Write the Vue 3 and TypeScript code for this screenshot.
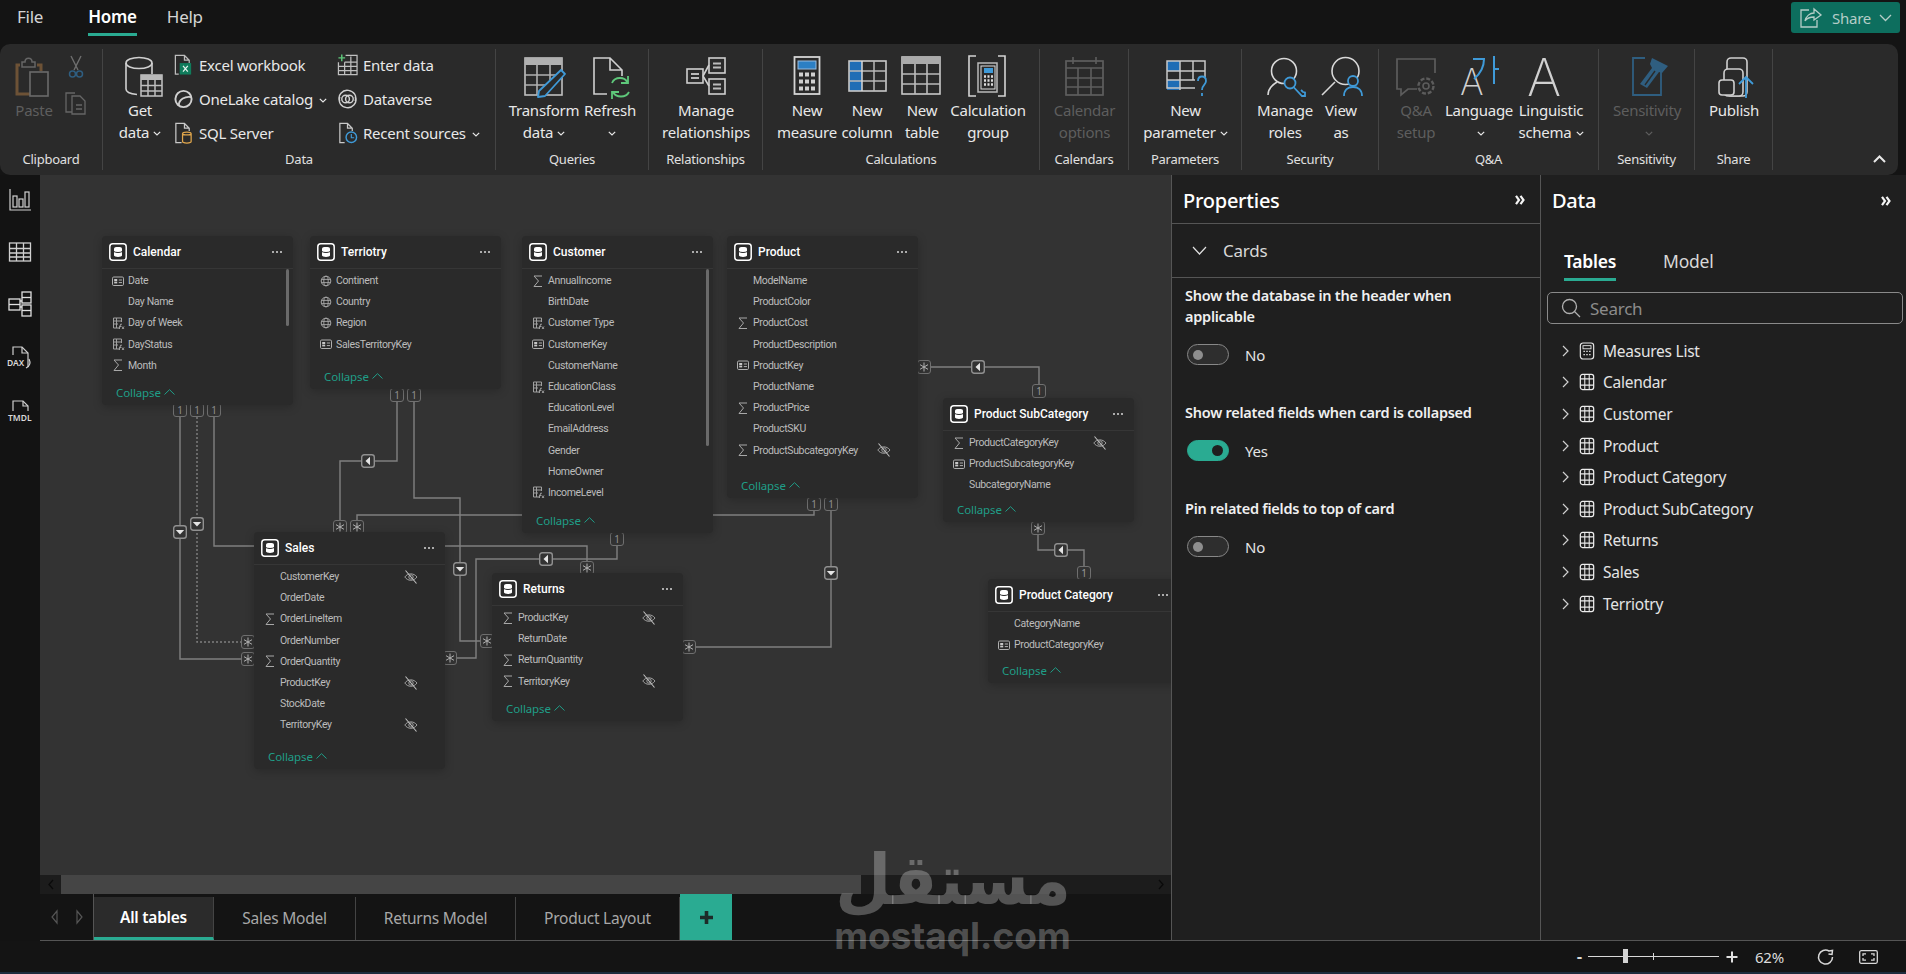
<script setup lang="ts">
interface RibbonItem {
  lines: string[]
  icon: string
  w: number
  chev?: boolean
  off?: boolean
}
interface RibbonGroup {
  label: string
  w: number
  pad: number
  items: RibbonItem[]
}
interface Field {
  n: string
  i?: string
  hid?: boolean
}
interface Card {
  title: string
  x: number
  y: number
  h: number
  bar?: number
  fields: Field[]
}

const clipboardW = 103

const rightGroups: RibbonGroup[] = [
  { label: 'Queries', w: 153, pad: 9, items: [
    { lines: ['Transform', 'data'], icon: 'transform', w: 78, chev: true },
    { lines: ['Refresh', ''], icon: 'refresh', w: 54, chev: true }
  ] },
  { label: 'Relationships', w: 114, pad: 0, items: [
    { lines: ['Manage', 'relationships'], icon: 'rel', w: 114 }
  ] },
  { label: 'Calculations', w: 277, pad: 11, items: [
    { lines: ['New', 'measure'], icon: 'measure', w: 66 },
    { lines: ['New', 'column'], icon: 'column', w: 54 },
    { lines: ['New', 'table'], icon: 'table', w: 56 },
    { lines: ['Calculation', 'group'], icon: 'calcgroup', w: 76 }
  ] },
  { label: 'Calendars', w: 89, pad: 0, items: [
    { lines: ['Calendar', 'options'], icon: 'calendar', w: 89, off: true }
  ] },
  { label: 'Parameters', w: 113, pad: 0, items: [
    { lines: ['New', 'parameter'], icon: 'param', w: 113, chev: true }
  ] },
  { label: 'Security', w: 137, pad: 8, items: [
    { lines: ['Manage', 'roles'], icon: 'roles', w: 70 },
    { lines: ['View', 'as'], icon: 'viewas', w: 42 }
  ] },
  { label: 'Q&A', w: 220, pad: 11, items: [
    { lines: ['Q&A', 'setup'], icon: 'qa', w: 52, off: true },
    { lines: ['Language', ''], icon: 'language', w: 74, chev: true },
    { lines: ['Linguistic', 'schema'], icon: 'linguistic', w: 70, chev: true }
  ] },
  { label: 'Sensitivity', w: 96, pad: 0, items: [
    { lines: ['Sensitivity', ''], icon: 'sensitivity', w: 96, chev: true, off: true }
  ] },
  { label: 'Share', w: 78, pad: 0, items: [
    { lines: ['Publish'], icon: 'publish', w: 78 }
  ] }
]

const dataCol1 = [
  { t: 'Excel workbook', i: 'excel' },
  { t: 'OneLake catalog', i: 'onelake', chev: true },
  { t: 'SQL Server', i: 'sql' }
]
const dataCol2 = [
  { t: 'Enter data', i: 'enter' },
  { t: 'Dataverse', i: 'dataverse' },
  { t: 'Recent sources', i: 'recent', chev: true }
]

const cards: Card[] = [
  { title: 'Calendar', x: 102, y: 236, h: 169, bar: 57, fields: [
    { n: 'Date', i: 'key' }, { n: 'Day Name' }, { n: 'Day of Week', i: 'calc' },
    { n: 'DayStatus', i: 'calc' }, { n: 'Month', i: 'sigma' }
  ] },
  { title: 'Terriotry', x: 310, y: 236, h: 153, fields: [
    { n: 'Continent', i: 'globe' }, { n: 'Country', i: 'globe' },
    { n: 'Region', i: 'globe' }, { n: 'SalesTerritoryKey', i: 'key' }
  ] },
  { title: 'Customer', x: 522, y: 236, h: 297, bar: 177, fields: [
    { n: 'AnnualIncome', i: 'sigma' }, { n: 'BirthDate' }, { n: 'Customer Type', i: 'calc' },
    { n: 'CustomerKey', i: 'key' }, { n: 'CustomerName' }, { n: 'EducationClass', i: 'calc' },
    { n: 'EducationLevel' }, { n: 'EmailAddress' }, { n: 'Gender' }, { n: 'HomeOwner' },
    { n: 'IncomeLevel', i: 'calc' }
  ] },
  { title: 'Product', x: 727, y: 236, h: 262, fields: [
    { n: 'ModelName' }, { n: 'ProductColor' }, { n: 'ProductCost', i: 'sigma' },
    { n: 'ProductDescription' }, { n: 'ProductKey', i: 'key' }, { n: 'ProductName' },
    { n: 'ProductPrice', i: 'sigma' }, { n: 'ProductSKU' },
    { n: 'ProductSubcategoryKey', i: 'sigma', hid: true }
  ] },
  { title: 'Product SubCategory', x: 943, y: 398, h: 124, fields: [
    { n: 'ProductCategoryKey', i: 'sigma', hid: true }, { n: 'ProductSubcategoryKey', i: 'key' },
    { n: 'SubcategoryName' }
  ] },
  { title: 'Sales', x: 254, y: 532, h: 237, fields: [
    { n: 'CustomerKey', hid: true }, { n: 'OrderDate' }, { n: 'OrderLineItem', i: 'sigma' },
    { n: 'OrderNumber' }, { n: 'OrderQuantity', i: 'sigma' }, { n: 'ProductKey', hid: true },
    { n: 'StockDate' }, { n: 'TerritoryKey', hid: true }
  ] },
  { title: 'Returns', x: 492, y: 573, h: 148, fields: [
    { n: 'ProductKey', i: 'sigma', hid: true }, { n: 'ReturnDate' },
    { n: 'ReturnQuantity', i: 'sigma' }, { n: 'TerritoryKey', i: 'sigma', hid: true }
  ] },
  { title: 'Product Category', x: 988, y: 579, h: 104, fields: [
    { n: 'CategoryName' }, { n: 'ProductCategoryKey', i: 'key' }
  ] }
]

// connector routes, in page coordinates
const links = [
  'M180 417V659H242',
  'M214 417V546H254',
  'M397 402V461H340V520',
  'M414 402V498H460V641H481',
  'M357 520V515H814V511',
  'M445 546H587V561',
  'M456 658H476V559H617V545',
  'M831 511V647H696',
  'M930 367H1039V385',
  'M1038 534V550H1084V567'
]
const ones = [[180, 410], [197, 410], [214, 410], [397, 395], [414, 395], [814, 504], [831, 504], [617, 539], [1039, 391], [1084, 573]]
const stars = [[340, 527], [357, 527], [248, 642], [248, 659], [450, 658], [487, 641], [587, 568], [689, 647], [924, 367], [1038, 528]]
const filters = [[180, 532], [197, 524], [368, 461], [460, 569], [546, 559], [831, 573], [978, 367], [1061, 550]]

const sheets = [
  { t: 'All tables', w: 120, on: true },
  { t: 'Sales Model', w: 142 },
  { t: 'Returns Model', w: 160 },
  { t: 'Product Layout', w: 164 }
]

const tree = ['Calendar', 'Customer', 'Product', 'Product Category', 'Product SubCategory', 'Returns', 'Sales', 'Terriotry']
</script>

<template>
  <div class="app">
    <!-- shared icon set -->
    <svg class="defs" width="0" height="0">
      <defs>
        <symbol id="chev" viewBox="0 0 8 5"><path d="M.8.8 4 4 7.2.8" fill="none" stroke="currentColor" stroke-width="1.2" /></symbol>
        <symbol id="tbl" viewBox="0 0 18 18">
          <rect x=".8" y=".8" width="16.4" height="16.4" rx="3" fill="none" stroke="#fff" stroke-width="1.5" />
          <path d="M5 5.5C5 3.6 13 3.6 13 5.5V12.5C13 14.4 5 14.4 5 12.5Z" fill="#fff" />
          <path d="M5 8.6C6.5 9.8 11.5 9.8 13 8.6" fill="none" stroke="#2a2a2a" stroke-width="1" />
        </symbol>
        <symbol id="f-sigma" viewBox="0 0 14 14"><path d="M11 2H3L7.5 7 3 12.5H11" fill="none" stroke="#a8a8a8" stroke-width="1" /></symbol>
        <symbol id="f-key" viewBox="0 0 14 14">
          <rect x="1.5" y="3" width="11" height="8.5" rx="1.2" fill="none" stroke="#b0b0b0" stroke-width="1" />
          <rect x="3.2" y="5" width="3" height="2" fill="#c8c8c8" /><rect x="3.2" y="7.6" width="3" height="1.8" fill="#c8c8c8" />
          <path d="M7.8 6H11M7.8 8.6H11" stroke="#b0b0b0" stroke-width="1" />
        </symbol>
        <symbol id="f-calc" viewBox="0 0 14 14">
          <path d="M9 12H2.5V2H10.5V6M2.5 5H10.5M2.5 8H7M5.5 2V12" fill="none" stroke="#a0a0a0" stroke-width="1" />
          <path d="M8.2 13 9.6 8.2H11M8.2 10.4H10.4M11 10.5 13 13M13 10.5 11 13" fill="none" stroke="#b8b8b8" stroke-width=".8" />
        </symbol>
        <symbol id="f-globe" viewBox="0 0 14 14">
          <circle cx="7" cy="7" r="4.8" fill="none" stroke="#a8a8a8" stroke-width="1" />
          <ellipse cx="7" cy="7" rx="2.2" ry="4.8" fill="none" stroke="#a8a8a8" stroke-width=".9" />
          <path d="M2.4 5.4H11.6M2.4 8.6H11.6" stroke="#a8a8a8" stroke-width=".9" />
        </symbol>
        <symbol id="eye" viewBox="0 0 16 16">
          <path d="M1.8 8C4.8 3.8 10.8 3.8 14 8 10.8 12.4 4.8 12.4 1.8 8Z" fill="none" stroke="#a0a0a0" stroke-width="1" />
          <circle cx="8" cy="8" r="2.2" fill="none" stroke="#a0a0a0" stroke-width="1" />
          <path d="M2.5 1.5 13.5 14.5" stroke="#c0c0c0" stroke-width="1.1" />
        </symbol>
        <symbol id="grid" viewBox="0 0 18 20">
          <rect x="1.5" y="1.5" width="15" height="17" rx="2.5" fill="none" stroke="#ececec" stroke-width="1.4" />
          <path d="M1.5 6.5H16.5M1.5 13.5H16.5M6.5 1.5V18.5M11.5 1.5V18.5" stroke="#ececec" stroke-width="1.2" />
        </symbol>
        <symbol id="calcmini" viewBox="0 0 18 20">
          <rect x="1.5" y="1" width="15" height="18" rx="3" fill="none" stroke="#e8e8e8" stroke-width="1.3" />
          <rect x="4.5" y="4" width="9" height="3.5" fill="none" stroke="#e8e8e8" stroke-width="1" />
          <path d="M5 10.5h1.6M8.2 10.5h1.6M11.4 10.5h1.6M5 14h1.6M8.2 14h1.6M11.4 14h1.6" stroke="#e8e8e8" stroke-width="1.5" />
        </symbol>

        <!-- ribbon, 42 box -->
        <symbol id="paste" viewBox="0 0 42 42" overflow="visible">
          <path d="M7 10H4V39H18" fill="none" stroke="#6d5236" stroke-width="3" />
          <path d="M24 10H28V16" fill="none" stroke="#6d5236" stroke-width="3" />
          <path d="M9 12V7H12C12 2 19 2 19 7H22V12Z" fill="#2a2a2a" stroke="#666" stroke-width="1.5" />
          <rect x="17" y="17" width="18" height="24" fill="#2a2a2a" stroke="#6b6b6b" stroke-width="1.6" />
        </symbol>
        <symbol id="getdata" viewBox="0 0 42 42" overflow="visible">
          <ellipse cx="20" cy="8" rx="13" ry="5.5" fill="none" stroke="#d0d0d0" stroke-width="1.6" />
          <path d="M7 8V34C7 37 12 39 18 39.500M33 8V19" fill="none" stroke="#d0d0d0" stroke-width="1.6" />
          <rect x="22" y="20" width="21" height="21" fill="#2a2a2a" stroke="#c4c4c4" stroke-width="1.5" />
          <rect x="22" y="20" width="21" height="5" fill="#b8b8b8" />
          <path d="M22 30.500H43M22 36H43M29 25V41M36 25V41" stroke="#bdbdbd" stroke-width="1.5" />
        </symbol>
        <symbol id="transform" viewBox="0 0 42 42" overflow="visible">
          <rect x="2" y="3" width="37" height="37" fill="none" stroke="#c0c0c0" stroke-width="1.6" />
          <rect x="2" y="3" width="37" height="7" fill="#b0b0b0" />
          <path d="M2 20H39M2 30H30M14 10V40M27 10V32" stroke="#b0b0b0" stroke-width="1.6" />
          <path d="M38 15 42 19 22 41 15 42 16 36Z" fill="#2a2a2a" stroke="#3f9ad8" stroke-width="1.8" stroke-linejoin="round" />
        </symbol>
        <symbol id="refresh" viewBox="0 0 42 42" overflow="visible">
          <path d="M18 39H5V3H21L33 15V21M21 3V15H33" fill="none" stroke="#d0d0d0" stroke-width="1.6" />
          <path d="M23 28C26 21 36 22 38 27M39 21V28H32M40 37C37 43 27 43 24 37M23 44V37H30" fill="none" stroke="#5ec77a" stroke-width="1.8" />
        </symbol>
        <symbol id="rel" viewBox="0 0 42 42" overflow="visible">
          <g fill="none" stroke="#cfcfcf" stroke-width="1.6">
            <rect x="2" y="14" width="16" height="14" /><rect x="24" y="3" width="16" height="15" /><rect x="24" y="24" width="16" height="15" />
            <path d="M18 21 24 10M18 21 24 31" />
          </g>
          <path d="M6 19H14M6 23H14M28 8.500H36M28 12.500H36M28 29.500H36M28 33.500H36" stroke="#bbb" stroke-width="2" />
        </symbol>
        <symbol id="measure" viewBox="0 0 42 42" overflow="visible">
          <rect x="8.500" y="2" width="25" height="37" fill="none" stroke="#d4d4d4" stroke-width="1.8" />
          <rect x="12" y="6" width="18" height="8" fill="#2c7fc4" stroke="#9bd" stroke-width="1" />
          <path d="M13 19.500h4M19 19.500h4M25 19.500h4M13 26.500h4M19 26.500h4M25 26.500h4M13 33.500h4M19 33.500h4M25 33.500h4" stroke="#d0d0d0" stroke-width="4" />
        </symbol>
        <symbol id="column" viewBox="0 0 42 42" overflow="visible">
          <rect x="3" y="6" width="13" height="30" fill="#1f6db5" />
          <rect x="3" y="6" width="37" height="30" fill="none" stroke="#c8c8c8" stroke-width="1.6" />
          <path d="M3 16H40M3 26H40M28 6V36" stroke="#b8b8b8" stroke-width="1.5" /><path d="M16 6V36" stroke="#d8d8d8" stroke-width="1.5" />
        </symbol>
        <symbol id="table" viewBox="0 0 42 42" overflow="visible">
          <rect x="1" y="2" width="38" height="37" fill="none" stroke="#c8c8c8" stroke-width="1.6" />
          <rect x="1" y="2" width="38" height="7" fill="#aaa" />
          <path d="M1 19H39M1 29H39M14 9V39M26 9V39" stroke="#bbb" stroke-width="1.6" />
        </symbol>
        <symbol id="calcgroup" viewBox="0 0 42 42" overflow="visible">
          <path d="M9 1H2V41H9M31 1H38V41H31" fill="none" stroke="#d4d4d4" stroke-width="1.6" />
          <rect x="11" y="8" width="19" height="29" fill="none" stroke="#bbb" stroke-width="1.5" />
          <rect x="14" y="11" width="14" height="23" fill="#2a2a2a" stroke="#ddd" stroke-width="1" />
          <rect x="17" y="13" width="9" height="5" fill="#3f9ad8" />
          <path d="M17 21.500h2M20.500 21.500h2M24 21.500h2M17 25.500h2M20.500 25.500h2M24 25.500h2M17 29.500h2M20.500 29.500h2M24 29.500h2" stroke="#ddd" stroke-width="2.4" />
        </symbol>
        <symbol id="calendar" viewBox="0 0 42 42" overflow="visible">
          <rect x="2" y="6" width="37" height="34" fill="none" stroke="#5e5e5e" stroke-width="1.7" />
          <path d="M2 13H39M2 23H39M2 32H39M14 13V40M27 13V40M9 2V9M32 2V9" stroke="#5e5e5e" stroke-width="1.6" />
        </symbol>
        <symbol id="param" viewBox="0 0 42 42" overflow="visible">
          <rect x="2" y="6" width="13" height="10" fill="#1f6db5" /><rect x="2" y="25" width="13" height="10" fill="#1f6db5" />
          <path d="M30 33H2V6H40V22M2 16H40M2 25H30M15 6V35M28 6V25" fill="none" stroke="#c8c8c8" stroke-width="1.5" />
          <path d="M33 26C33 20 41 20 41 26 41 30 37 30 37 35M37 38V41" fill="none" stroke="#3f9ad8" stroke-width="1.8" />
        </symbol>
        <symbol id="roles" viewBox="0 0 42 42" overflow="visible">
          <circle cx="20" cy="16" r="12.500" fill="none" stroke="#d8d8d8" stroke-width="1.6" />
          <path d="M4 40C4 34 8 30 13 27" fill="none" stroke="#d8d8d8" stroke-width="1.6" />
          <circle cx="26" cy="28" r="5.500" fill="#2a2a2a" stroke="#3f9ad8" stroke-width="1.8" />
          <path d="M29.500 32 38 41H41V37.500L39 37 37 35" fill="none" stroke="#3f9ad8" stroke-width="1.8" />
        </symbol>
        <symbol id="viewas" viewBox="0 0 42 42" overflow="visible">
          <circle cx="25.500" cy="16" r="13.500" fill="none" stroke="#d8d8d8" stroke-width="1.6" />
          <path d="M2 40 15 27" stroke="#d8d8d8" stroke-width="1.6" />
          <circle cx="33" cy="26" r="5" fill="#2a2a2a" stroke="#3f9ad8" stroke-width="1.8" />
          <path d="M24 41C24 35 28 32 33 32S42 35 42 41" fill="none" stroke="#3f9ad8" stroke-width="1.8" />
        </symbol>
        <symbol id="qa" viewBox="0 0 42 42" overflow="visible">
          <path d="M22 34H13L6 40V34H2V4H40V18" fill="none" stroke="#5c5c5c" stroke-width="1.7" />
          <circle cx="31" cy="31" r="3" fill="none" stroke="#5c5c5c" stroke-width="1.6" />
          <circle cx="31" cy="31" r="7.500" fill="none" stroke="#5c5c5c" stroke-width="2.400" stroke-dasharray="4 1.900" />
        </symbol>
        <symbol id="language" viewBox="0 0 42 42" overflow="visible">
          <text x="2" y="40" class="ic-a" font-size="36">A</text>
          <path d="M15 4H26C26 13 22 19 16 24M36 1V29M36 14H41" fill="none" stroke="#3f9ad8" stroke-width="2" />
        </symbol>
        <symbol id="linguistic" viewBox="0 0 42 42" overflow="visible">
          <text x="-3" y="41" class="ic-a" font-size="52">A</text>
        </symbol>
        <symbol id="sensitivity" viewBox="0 0 42 42" overflow="visible">
          <path d="M19 3H7V40H35V16" fill="none" stroke="#2f5e80" stroke-width="1.800" />
          <path d="M26 3 42 11 36 18 33 17 21 33 14 29 26 13 24 9Z" fill="#2f5e80" />
          <path d="M19 30 29 16" stroke="#2a2a2a" stroke-width="1.400" />
        </symbol>
        <symbol id="publish" viewBox="0 0 42 42" overflow="visible">
          <g fill="none" stroke="#cfcfcf" stroke-width="1.600">
            <rect x="14" y="3" width="20" height="38" rx="4" fill="#2a2a2a" />
            <rect x="11" y="14" width="19" height="27" rx="4" fill="#2a2a2a" />
            <rect x="6" y="25" width="15" height="15" rx="3" fill="#2a2a2a" />
          </g>
          <path d="M33 43V22M26 29 33 22 40 29" fill="none" stroke="#3f9ad8" stroke-width="1.800" />
        </symbol>

        <!-- ribbon, small buttons -->
        <symbol id="excel" viewBox="0 0 22 22">
          <path d="M6 20.500H2.500V1H12L17 6V9M12 1V6H17" fill="none" stroke="#bdbdbd" stroke-width="1.300" />
          <rect x="7" y="9" width="12" height="12" fill="#107c5c" />
          <path d="M10.500 12 15.500 18M15.500 12 10.500 18" stroke="#e8f3ee" stroke-width="1.300" />
        </symbol>
        <symbol id="onelake" viewBox="0 0 22 22">
          <circle cx="11" cy="11" r="8.500" fill="none" stroke="#d0d0d0" stroke-width="2" />
          <path d="M6 18C6 11 13 8 19 9" fill="none" stroke="#d0d0d0" stroke-width="2" />
        </symbol>
        <symbol id="sql" viewBox="0 0 22 22">
          <path d="M9 21H3V1H12L17 6V9M12 1V6H17" fill="none" stroke="#c8c8c8" stroke-width="1.300" />
          <path d="M10 11.500C10 9.500 19 9.500 19 11.500V20C19 22 10 22 10 20ZM10 11.500C10 13.500 19 13.500 19 11.500" fill="none" stroke="#e0a64c" stroke-width="1.300" />
        </symbol>
        <symbol id="enter" viewBox="0 0 22 22">
          <path d="M1.500 8V21H21V1H9M8 8H21M1.500 12.500H21M1.500 17H21M8 8V21M14.500 2V21" fill="none" stroke="#c0c0c0" stroke-width="1.300" />
          <path d="M5 0V7M1.500 3.500H8.500" stroke="#5ec77a" stroke-width="1.500" />
        </symbol>
        <symbol id="dataverse" viewBox="0 0 22 22">
          <g fill="none" stroke="#d0d0d0" stroke-width="1.500">
            <path d="M3 13C0 7 6 1 12 2 18 3 21 8 19 13" />
            <path d="M19 9C22 15 16 21 10 20 4 19 1 14 3 9" />
            <circle cx="9" cy="11" r="4" /><circle cx="13" cy="11" r="4" />
          </g>
        </symbol>
        <symbol id="recent" viewBox="0 0 22 22">
          <path d="M8 21H3V1H11L16 6V9M11 1V6H16" fill="none" stroke="#c8c8c8" stroke-width="1.300" />
          <circle cx="15" cy="15.500" r="5.500" fill="none" stroke="#3f9ad8" stroke-width="1.500" />
          <path d="M15 12V16H18" fill="none" stroke="#3f9ad8" stroke-width="1.200" />
        </symbol>
      </defs>
    </svg>

    <header class="topbar">
      <nav class="menu">
        <span class="menu-item first">File</span>
        <span class="menu-item on">Home</span>
        <span class="menu-item">Help</span>
      </nav>
      <button class="share">
        <svg width="24" height="22" viewBox="0 0 24 22" fill="none" stroke="#b4cdc7" stroke-width="1.300">
          <path d="M10 3H2V20H18V13" /><path d="M6 14C7 9 11 6 15 6V2L22 8 15 13V10C11 10 8 11 6 14Z" />
        </svg>
        <span class="share-t">Share</span>
        <svg class="share-c" width="13" height="8" viewBox="0 0 13 8" fill="none" stroke="#b4cdc7" stroke-width="1.300"><path d="M1 1 6.500 6.500 12 1" /></svg>
      </button>
    </header>

    <section class="ribbon">
      <div class="grp" :style="{ width: clipboardW + 'px' }">
        <div class="grp-body clip">
          <div class="big off">
            <svg class="big-ic"><use href="#paste" /></svg>
            <span class="ln">Paste</span>
          </div>
          <div class="clip-side">
            <svg width="16" height="24" viewBox="0 0 16 24" fill="none">
              <path d="M3 1 10 15M13 1 6 15" stroke="#6e6e6e" stroke-width="1.400" />
              <circle cx="4.500" cy="19" r="3" stroke="#2f5e80" stroke-width="1.500" /><circle cx="11.500" cy="19" r="3" stroke="#2f5e80" stroke-width="1.500" />
            </svg>
            <svg width="22" height="24" viewBox="0 0 22 24" fill="none" stroke="#666" stroke-width="1.300">
              <path d="M7 21H1V2H10" /><path d="M7 5H15L20 10V23H7Z" /><path d="M11 14H17M11 18H17" />
            </svg>
          </div>
        </div>
        <div class="grp-label">Clipboard</div>
      </div>

      <div class="grp data-grp">
        <div class="grp-body">
          <div class="big get">
            <svg class="big-ic"><use href="#getdata" /></svg>
            <span class="ln">Get</span>
            <span class="ln">data<svg class="ch"><use href="#chev" /></svg></span>
          </div>
          <div class="col col1">
            <div v-for="it in dataCol1" :key="it.t" class="sm">
              <svg class="sm-ic"><use :href="'#' + it.i" /></svg>
              <span>{{ it.t }}</span>
              <svg v-if="it.chev" class="ch sm-ch"><use href="#chev" /></svg>
            </div>
          </div>
          <div class="col col2">
            <div v-for="it in dataCol2" :key="it.t" class="sm">
              <svg class="sm-ic"><use :href="'#' + it.i" /></svg>
              <span>{{ it.t }}</span>
              <svg v-if="it.chev" class="ch sm-ch"><use href="#chev" /></svg>
            </div>
          </div>
        </div>
        <div class="grp-label">Data</div>
      </div>

      <div v-for="g in rightGroups" :key="g.label" class="grp" :style="{ width: g.w + 'px' }">
        <div class="grp-body" :style="{ paddingLeft: g.pad + 'px' }">
          <div v-for="it in g.items" :key="it.icon" class="big" :class="{ off: it.off }" :style="{ width: it.w + 'px' }">
            <svg class="big-ic"><use :href="'#' + it.icon" /></svg>
            <span v-for="(l, i) in it.lines" :key="i" class="ln">
              {{ l }}<svg v-if="it.chev && i === it.lines.length - 1" class="ch"><use href="#chev" /></svg>
            </span>
          </div>
        </div>
        <div class="grp-label">{{ g.label }}</div>
      </div>

      <svg class="rib-up" width="13" height="8" viewBox="0 0 13 8" fill="none" stroke="#e8e8e8" stroke-width="2"><path d="M1 7 6.500 1.500 12 7" /></svg>
    </section>

    <main class="main">
      <aside class="rail">
        <svg width="24" height="26" viewBox="0 0 24 26" fill="none" stroke="#d0d0d0" stroke-width="1.200">
          <path d="M2 2V23H23" /><rect x="5" y="9" width="4" height="11" /><rect x="11" y="12" width="4" height="8" /><rect x="17" y="5" width="4" height="15" />
        </svg>
        <svg width="24" height="22" viewBox="0 0 24 22" fill="none" stroke="#d0d0d0" stroke-width="1.300">
          <rect x="1.500" y="2" width="21" height="18" /><path d="M1.500 7.500H22.500M1.500 12H22.500M1.500 16H22.500M8.500 2V20M15.500 2V20" />
        </svg>
        <svg width="26" height="26" viewBox="0 0 26 26" fill="none" stroke="#e0e0e0" stroke-width="1.300">
          <rect x="2" y="8" width="11" height="11" /><path d="M2 13.500H13" /><rect x="15" y="1" width="9" height="11" fill="#131313" /><path d="M15 6.500H24" />
          <rect x="15" y="14" width="9" height="11" fill="#131313" /><path d="M15 19.500H24" /><path d="M13 10H15M13 16H15" />
        </svg>
        <svg width="26" height="26" viewBox="0 0 26 26" fill="none" stroke="#d0d0d0" stroke-width="1.200">
          <path d="M6 10V2H15L21 8V22" /><path d="M15 2V8H21" /><path d="M22 14C24 18 23 21 19 23" />
          <text x="0" y="21" class="rail-t" stroke="none">DAX</text>
        </svg>
        <svg width="26" height="26" viewBox="0 0 26 26" fill="none" stroke="#d0d0d0" stroke-width="1.200">
          <path d="M6 12V2H16L21 7V12" /><path d="M16 2V7H21" />
          <text x="1" y="22" class="rail-t" stroke="none">TMDL</text>
        </svg>
      </aside>

      <div class="center">
        <div class="canvas">
          <svg class="wires" width="1131" height="700" viewBox="40 175 1131 700">
            <g fill="none" stroke="#808080" stroke-width="1.400">
              <path v-for="l in links" :key="l" :d="l" />
              <path d="M197 417V642H242" stroke-dasharray="2 2" />
            </g>
            <g v-for="b in ones" :key="b.join()" :transform="`translate(${b[0] - 7} ${b[1] - 7})`">
              <rect x=".5" y=".5" width="13" height="13" rx="2.500" fill="#333" stroke="#707070" />
              <text x="7" y="10.800" class="b-one">1</text>
            </g>
            <g v-for="b in stars" :key="b.join()" :transform="`translate(${b[0] - 7} ${b[1] - 7})`">
              <rect x=".5" y=".5" width="13" height="13" rx="2.500" fill="#333" stroke="#707070" />
              <path d="M7 2.500V11.500M3 4.700 11 9.300M3 9.300 11 4.700" stroke="#b4b4b4" stroke-width="1" />
            </g>
            <g v-for="b in filters" :key="b.join()" :transform="`translate(${b[0] - 7} ${b[1] - 7})`">
              <rect x=".7" y=".7" width="12.600" height="12.600" rx="2.500" fill="#333" stroke="#909090" stroke-width="1.400" />
              <path v-if="b[1] !== 461 && b[1] !== 559 && b[1] !== 367 && b[1] !== 550" d="M2.800 5H11.200L7 9.500Z" fill="#e4e4e4" />
              <path v-else d="M9 2.800V11.200L4.500 7Z" fill="#e4e4e4" />
            </g>
          </svg>

          <div
            v-for="c in cards"
            :key="c.title"
            class="card"
            :style="{ left: c.x - 40 + 'px', top: c.y - 175 + 'px', height: c.h + 'px' }"
          >
            <div class="card-head">
              <svg class="card-ic"><use href="#tbl" /></svg>
              <span class="card-title">{{ c.title }}</span>
              <span class="dots"><i></i><i></i><i></i></span>
            </div>
            <div class="fields">
              <div v-for="f in c.fields" :key="f.n" class="field">
                <svg class="f-ic"><use v-if="f.i" :href="'#f-' + f.i" /></svg>
                <span class="f-name">{{ f.n }}</span>
                <svg v-if="f.hid" class="f-eye"><use href="#eye" /></svg>
              </div>
            </div>
            <div v-if="c.bar" class="card-bar" :style="{ height: c.bar + 'px' }"></div>
            <div class="collapse">
              Collapse
              <svg width="11" height="6" viewBox="0 0 11 6" fill="none" stroke="#1f9e88" stroke-width="1"><path d="M.5 5.500 5.500 .7 10.500 5.500" /></svg>
            </div>
          </div>
        </div>

        <div class="hscroll">
          <span class="hs-btn">
            <svg width="6" height="11" viewBox="0 0 6 11" fill="none" stroke="#0a0a0a" stroke-width="1.300"><path d="M5 1 1 5.500 5 10" /></svg>
          </span>
          <span class="hs-thumb"></span>
          <span class="hs-end">
            <svg width="6" height="11" viewBox="0 0 6 11" fill="none" stroke="#0a0a0a" stroke-width="1.300"><path d="M1 1 5 5.500 1 10" /></svg>
          </span>
        </div>

        <div class="sheets">
          <div class="sheet-nav">
            <svg width="7" height="14" viewBox="0 0 7 14" fill="none" stroke="#555" stroke-width="1.200"><path d="M6 1 1 7 6 13Z" /></svg>
            <svg width="7" height="14" viewBox="0 0 7 14" fill="none" stroke="#555" stroke-width="1.200"><path d="M1 1 6 7 1 13Z" /></svg>
          </div>
          <div v-for="s in sheets" :key="s.t" class="sheet" :class="{ on: s.on }" :style="{ width: s.w + 'px' }">{{ s.t }}</div>
          <div class="sheet-add">
            <svg width="15" height="15" viewBox="0 0 15 15"><path d="M7.500 1V14M1 7.500H14" stroke="#1d2b28" stroke-width="3.600" /></svg>
          </div>
        </div>
      </div>

      <aside class="panel props">
        <div class="p-head line">
          <span class="p-title">Properties</span>
          <svg class="p-dbl" width="10" height="10" viewBox="0 0 10 10" fill="none" stroke="#f4f4f4" stroke-width="2.200"><path d="M1 .8 4 5 1 9.200M5.500 .8 8.500 5 5.500 9.200" /></svg>
        </div>
        <div class="cards-row">
          <svg width="15" height="9" viewBox="0 0 15 9" fill="none" stroke="#e0e0e0" stroke-width="1.200"><path d="M1 1 7.500 8 14 1" /></svg>
          <span>Cards</span>
        </div>
        <div class="p-body">
          <div class="opt-t">Show the database in the header when applicable</div>
          <div class="opt-v">
            <span class="toggle"><i></i></span><span>No</span>
          </div>
          <div class="opt-t">Show related fields when card is collapsed</div>
          <div class="opt-v">
            <span class="toggle yes"><i></i></span><span>Yes</span>
          </div>
          <div class="opt-t">Pin related fields to top of card</div>
          <div class="opt-v">
            <span class="toggle"><i></i></span><span>No</span>
          </div>
        </div>
      </aside>

      <aside class="panel data">
        <div class="p-head">
          <span class="p-title">Data</span>
          <svg class="p-dbl" width="10" height="10" viewBox="0 0 10 10" fill="none" stroke="#f4f4f4" stroke-width="2.200"><path d="M1 .8 4 5 1 9.200M5.500 .8 8.500 5 5.500 9.200" /></svg>
        </div>
        <div class="d-tabs">
          <span class="d-tab on">Tables</span>
          <span class="d-tab">Model</span>
        </div>
        <div class="search">
          <svg width="20" height="20" viewBox="0 0 20 20" fill="none" stroke="#b0b0b0" stroke-width="1.300"><circle cx="8.500" cy="8.500" r="7" /><path d="M13.500 13.500 19 19" /></svg>
          <span>Search</span>
        </div>
        <ul class="tree">
          <li>
            <svg class="t-ch" width="7" height="12" viewBox="0 0 7 12" fill="none" stroke="#d0d0d0" stroke-width="1.200"><path d="M1 1 6 6 1 11" /></svg>
            <svg class="t-ic"><use href="#calcmini" /></svg>
            <span>Measures List</span>
          </li>
          <li v-for="t in tree" :key="t">
            <svg class="t-ch" width="7" height="12" viewBox="0 0 7 12" fill="none" stroke="#d0d0d0" stroke-width="1.200"><path d="M1 1 6 6 1 11" /></svg>
            <svg class="t-ic"><use href="#grid" /></svg>
            <span>{{ t }}</span>
          </li>
        </ul>
      </aside>
    </main>

    <footer class="status">
      <span class="z-minus">-</span>
      <span class="slider"><i class="thumb"></i><i class="tick"></i></span>
      <svg class="z-plus" width="12" height="12" viewBox="0 0 12 12"><path d="M6 .5V11.500M.5 6H11.500" stroke="#e0e0e0" stroke-width="2" /></svg>
      <span class="z-pct">62%</span>
      <svg class="z-re" width="18" height="18" viewBox="0 0 18 18" fill="none" stroke="#d8d8d8" stroke-width="1.500"><path d="M15.500 9A7 7 0 1 1 12 3L15.500 2.500 15 6.500 11.500 6" /></svg>
      <svg class="z-fit" width="19" height="14" viewBox="0 0 19 14" fill="none" stroke="#d8d8d8" stroke-width="1.300">
        <rect x=".7" y=".7" width="17.600" height="12.600" rx="1.500" /><path d="M4 6V3.800H7M15 6V3.800H12M4 8V10.200H7M15 8V10.200H12" />
      </svg>
    </footer>
    <div class="edge"></div>

    <div class="mark">
      <span class="mark-ar">مستقل</span>
      <span class="mark-en">mostaql.com</span>
    </div>
  </div>
</template>

<style>
html, body { margin: 0; background: #141414; }
</style>

<style scoped>
.app {
  position: relative;
  width: 1906px;
  height: 974px;
  overflow: hidden;
  display: flex;
  flex-direction: column;
  background: #141414;
  color: #e8e8e8;
  font-family: "Noto Sans", "Open Sans", sans-serif;
  font-size: 15px;
  letter-spacing: -0.25px;
}
.defs { position: absolute; }
svg { display: block; overflow: visible; flex: none; }

.topbar { height: 44px; flex: none; display: flex; justify-content: space-between; }
.menu { display: flex; padding-left: 17px; gap: 30px; height: 36px; }
.menu-item { font-size: 17px; line-height: 33px; color: #d4d4d4; }
.menu-item.first { margin-right: 15px; }
.menu-item.on { color: #fff; font-weight: 600; border-bottom: 3px solid #2aab92; }
.share {
  display: flex;
  align-items: center;
  width: 109px;
  height: 31px;
  margin: 2px 6px 0 0;
  padding: 0 0 0 8px;
  border: 0;
  border-radius: 3px;
  background: #0d6e5e;
  color: #b4cdc7;
  font: inherit;
  font-size: 15px;
  letter-spacing: inherit;
}
.share-t { margin-left: 9px; }
.share-c { margin-left: 8px; }

.ribbon {
  position: relative;
  height: 131px;
  flex: none;
  width: 1898px;
  display: flex;
  background: #2a2a2a;
  border-radius: 10px;
}
.grp {
  box-sizing: border-box;
  height: 121px;
  margin-top: 5px;
  border-right: 1px solid #444;
  display: flex;
  flex-direction: column;
  flex: none;
}
.data-grp { width: 393px; }
.grp-body { height: 99px; display: flex; }
.grp-label { text-align: center; font-size: 13px; line-height: 22px; color: #e0e0e0; }
.big {
  display: flex;
  flex-direction: column;
  align-items: center;
  padding-top: 6px;
  white-space: nowrap;
  color: #e8e8e8;
  flex: none;
}
.big.off { color: #5e5e5e; }
.big-ic { width: 42px; height: 42px; margin-bottom: 2px; }
.ln { display: flex; align-items: center; height: 22px; line-height: 22px; }
.ch { width: 8px; height: 5px; margin: 2px 0 0 4px; color: currentColor; }
.clip { padding-left: 6px; }
.clip .big { width: 56px; }
.clip-side { display: flex; flex-direction: column; align-items: center; gap: 12px; width: 26px; padding-top: 6px; margin-left: 1px; }
.get { width: 56px; margin-left: 9px; }
.col { display: flex; flex-direction: column; margin-top: -1px; }
.col1 { width: 164px; margin-left: 5px; }
.sm { display: flex; align-items: center; flex: none; height: 34px; white-space: nowrap; gap: 5px; }
.sm-ic { width: 21px; height: 22px; }
.sm-ch { margin-left: 1px; }
.rib-up { position: absolute; right: 12px; top: 111px; }

.main { flex: 1; display: flex; min-height: 0; }
.rail {
  width: 40px;
  flex: none;
  display: flex;
  flex-direction: column;
  align-items: center;
  gap: 28px;
  padding-top: 12px;
  box-sizing: border-box;
  background: #131313;
}
.rail-t { font-size: 8.500px; font-weight: 600; fill: #d8d8d8; letter-spacing: 0; }

.center { width: 1131px; flex: none; display: flex; flex-direction: column; }
.canvas { position: relative; height: 700px; background: #333; overflow: hidden; }
.wires { position: absolute; left: 0; top: 0; }
.card {
  position: absolute;
  width: 191px;
  box-sizing: border-box;
  display: flex;
  flex-direction: column;
  background: #2a2a2a;
  border-radius: 4px;
  box-shadow: 0 2px 10px rgba(0, 0, 0, .22);
  font-size: 10.500px;
}
.card-head {
  position: relative;
  height: 33px;
  flex: none;
  display: flex;
  align-items: center;
  padding: 0 7px;
  border-bottom: 1px solid #363636;
  box-sizing: border-box;
}
.card-ic { width: 18px; height: 18px; }
.card-title { margin-left: 6px; font-family: Roboto, sans-serif; font-size: 12px; font-weight: 500; color: #fff; white-space: nowrap; letter-spacing: 0; }
.dots { margin-left: auto; display: flex; gap: 2px; padding-right: 4px; }
.dots i { width: 2px; height: 2px; background: #d8d8d8; border-radius: 50%; }
.fields { padding-top: 1px; }
.field { display: flex; align-items: center; height: 21.200px; padding: 0 26px 0 9px; font-family: Roboto, sans-serif; color: #bcbcbc; white-space: nowrap; letter-spacing: -0.35px; }
.f-ic { width: 14px; height: 14px; margin-right: 3px; }
.f-eye { width: 16px; height: 16px; margin-left: auto; }
.card-bar { position: absolute; right: 4px; top: 33px; width: 3px; background: #6a6a6a; border-radius: 2px; }
.collapse { margin-top: auto; height: 26px; display: flex; align-items: center; gap: 3px; padding-left: 14px; color: #1f9e88; flex: none; letter-spacing: -0.1px; font-size: 11.500px; }

.hscroll { height: 19px; flex: none; display: flex; background: #1c1c1c; }
.hs-btn { width: 21px; display: flex; align-items: center; justify-content: center; background: #1c1c1c; }
.hs-thumb { width: 800px; background: #454545; }
.hs-end { margin-left: auto; width: 20px; display: flex; align-items: center; justify-content: center; }

.sheets { height: 47px; flex: none; display: flex; background: #141414; border-bottom: 1px solid #555; box-sizing: border-box; }
.sheet-nav { width: 54px; box-sizing: border-box; border-left: 0; border-right: 1px solid #555; display: flex; align-items: center; justify-content: center; gap: 18px; }
.sheet {
  box-sizing: border-box;
  display: flex;
  align-items: center;
  justify-content: center;
  margin-top: 3px;
  padding-bottom: 2px;
  font-size: 15.500px;
  color: #a8a8a8;
  border-right: 1px solid #444;
  white-space: nowrap;
}
.sheet.on { color: #fff; font-weight: 600; background: #2b2b2b; border-bottom: 3px solid #2aab92; padding-bottom: 0; }
.sheet-add { width: 52px; background: #2aab92; display: flex; align-items: center; justify-content: center; }

.panel { box-sizing: border-box; background: #1f1f1f; border-left: 1px solid #555; border-bottom: 1px solid #555; display: flex; flex-direction: column; flex: none; }
.props { width: 369px; }
.data { width: 366px; }
.p-head { height: 49px; flex: none; display: flex; align-items: center; justify-content: space-between; padding: 2px 15px 0 11px; box-sizing: border-box; }
.p-head.line { border-bottom: 1px solid #555; }
.p-title { font-size: 20px; font-weight: 500; color: #fff; }
.cards-row { height: 54px; flex: none; box-sizing: border-box; display: flex; align-items: center; gap: 16px; padding-left: 20px; font-size: 17px; color: #d8d8d8; border-bottom: 1px solid #555; }
.p-body { padding: 7px 13px; }
.opt-t { width: 310px; font-size: 14.500px; font-weight: 600; line-height: 21px; color: #f0f0f0; }
.opt-v { display: flex; align-items: center; gap: 16px; height: 21px; margin: 17px 0 37px; color: #e4e4e4; }
.toggle { width: 42px; height: 21px; box-sizing: border-box; margin-left: 2px; border: 1px solid #888; border-radius: 11px; background: #2e2e2e; display: flex; align-items: center; padding-left: 5px; }
.toggle i { width: 10px; height: 10px; border-radius: 50%; background: #8e8e8e; }
.toggle.yes { background: #2aab92; border-color: #2aab92; justify-content: flex-end; padding: 0 5px 0 0; }
.toggle.yes i { width: 11px; height: 11px; background: #1f1f1f; }

.d-tabs { display: flex; gap: 47px; height: 37px; margin-top: 20px; padding-left: 23px; flex: none; }
.d-tab { font-size: 17.500px; line-height: 34px; color: #d8d8d8; box-sizing: border-box; height: 37px; }
.d-tab.on { color: #fff; font-weight: 600; border-bottom: 3px solid #2aab92; }
.search {
  display: flex;
  align-items: center;
  gap: 9px;
  box-sizing: border-box;
  height: 32px;
  margin: 11px 3px 0 6px;
  padding-left: 13px;
  border: 1px solid #8a8a8a;
  border-radius: 5px;
  color: #8c8c8c;
  font-size: 17px;
  flex: none;
}
.tree { list-style: none; margin: 11px 0 0; padding: 0 0 0 21px; }
.tree li { display: flex; align-items: center; height: 31.600px; font-size: 15.500px; color: #e4e4e4; white-space: nowrap; }
.t-ic { width: 16px; height: 18px; margin: 0 8px 0 10px; }

.status { height: 31px; flex: none; display: flex; align-items: center; padding-right: 28px; justify-content: flex-end; }
.z-minus { font-size: 17px; font-weight: 600; color: #d8d8d8; margin-right: 6px; }
.slider { position: relative; width: 131px; height: 1px; background: #d8d8d8; }
.thumb { position: absolute; left: 35px; top: -7px; width: 5px; height: 14px; background: #d4d4d4; }
.tick { position: absolute; left: 65px; top: -3px; width: 1px; height: 7px; background: #d8d8d8; }
.z-plus { margin-left: 7px; }
.z-pct { margin-left: 17px; width: 40px; font-size: 15px; color: #dcdcdc; }
.z-re { margin-left: 22px; }
.z-fit { margin-left: 24px; }
.edge { height: 2px; flex: none; background: #1d2c3d; }

.mark {
  position: absolute;
  left: 838px;
  top: 842px;
  width: 229px;
  display: flex;
  flex-direction: column;
  align-items: center;
  color: rgba(255, 255, 255, .27);
  pointer-events: none;
  letter-spacing: 0;
}
.mark-ar { font-family: "DejaVu Sans", sans-serif; font-weight: 700; font-size: 70px; line-height: 76px; transform: scaleX(.92); }
.mark-en { font-family: Inter, sans-serif; font-weight: 700; font-size: 37px; line-height: 36px; }

.ic-a { font-family: Inter, "Noto Sans", sans-serif; font-weight: 200; fill: #d0d0d0; }
.b-one { font-size: 10px; fill: #9a9a9a; text-anchor: middle; letter-spacing: 0; }
</style>
